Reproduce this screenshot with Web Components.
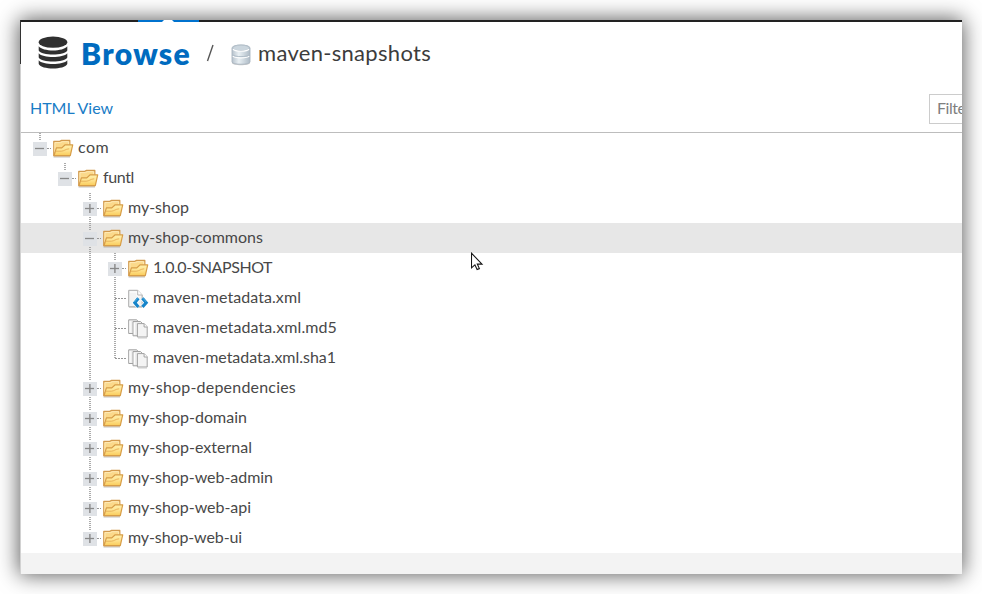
<!DOCTYPE html>
<html lang="en">
<head>
<meta charset="utf-8">
<title>Browse maven-snapshots</title>
<style>
html,body{margin:0;background:#fff;overflow:hidden}
body{font-family:Lato,"Open Sans",sans-serif;color:#333}
</style>
</head>
<body>
<repo-browser></repo-browser>
<script>
const FOLDER = `<svg width="22" height="20" viewBox="0 0 22 20"><defs><linearGradient id="g" x1="0" y1="0" x2="0" y2="1"><stop stop-color="#fff1ae"/><stop offset=".55" stop-color="#fee18c"/><stop offset="1" stop-color="#f9cb59"/></linearGradient></defs>
<path d="M.5 17.9h16.5" stroke="#999" stroke-opacity=".5" stroke-width="1.4"/>
<path d="M.8 16.6V2.3h6l1.4-.8h8.6v4.6h.6v4L16.5 16.6z" fill="#fbd98a" stroke="#d29a4e" stroke-width="1.3" stroke-linejoin="round"/>
<path d="M1.9 13V3.6h5.6l1.6-.9h6.6v3" fill="none" stroke="#ffebb8"/>
<path d="M3.4 8.9h5.4l3.4-3.1h7.5L17.3 16.6H1z" fill="url(#g)" stroke="#d79d48" stroke-width="1.2" stroke-linejoin="round"/><path d="M3 12.2h5.2c3 0 4.2-2.2 8-2.4" fill="none" stroke="#e5ae55" stroke-width=".9"/></svg>`;
const XML = `<svg width="22" height="20" viewBox="0 0 22 20"><path d="M.7 1.3h9L14.2 6v11.7H.7z" fill="#f2f3f3" stroke="#acacac"/><path d="M2 3h7v4h4" fill="none" stroke="#fff"/><path d="M9.7 1.3V6h4.5" fill="#fff" stroke="#b5b5b5"/><path d="M1 18.4h13" stroke="#ccc"/>
<path d="M10.4 9.5L6.8 13.7l3.6 4.1M14.4 9.5l3.8 4.2-3.8 4.1" fill="none" stroke="#fff" stroke-width="4.4"/><path d="M10.4 9.3L6.8 13.7l3.6 4.2M14.4 9.3l3.8 4.4-3.8 4.2" fill="none" stroke="#1684c9" stroke-width="3.1"/><path d="M9.8 9.3L6.4 13M15.2 9.3l3 3.7" stroke="#48afe2" stroke-width="1"/></svg>`;
const DOCS = `<svg width="22" height="20" viewBox="0 0 22 20"><g fill="#eee" stroke="#a2a2a2"><path d="M.7 .8h8l1.8 2v11.7H.7z"/><path d="M5 2.5h7.5l2 2v12.3H5z"/><path d="M9.4 4.6h6.8l3 3.2v10.2H9.4z" fill="#f4f4f4"/><path d="M16.1 4.6v3.4h3.2" fill="#fff"/></g><path d="M2 2v11.5M6.3 3.8v11.9" stroke="#fff"/><path d="M10 19h9" stroke="#ccc"/></svg>`;
const DB = `<svg width="30" height="34" viewBox="0 0 30 34" fill="#303030"><ellipse cx="15" cy="6.2" rx="14.3" ry="5.6"/><path d="M.7 10.2C4.6 15.8 25.4 15.8 29.3 10.2V14.4C26.8 19.8 3.2 19.8.7 14.4z"/><path d="M.7 17.2C4.6 22.2 25.4 22.2 29.3 17.2v4.2C26.8 26.8 3.2 26.8.7 21.4z"/><path d="M.7 24.2c4 5 24.6 5 28.6 0v3.9c-2.6 6-26 6-28.6 0z"/></svg>`;
const REPO = `<svg class="repo" width="20" height="22" viewBox="0 0 20 22"><defs><linearGradient id="r"><stop stop-color="#b7c2cc"/><stop offset=".38" stop-color="#e9f0f4"/><stop offset="1" stop-color="#aebbc6"/></linearGradient></defs><path d="M1 17c0 4 18 4 18 0v2c0 3-18 3-18 0z" fill="#ccc"/><path d="M1 4v14c0 3 18 3 18 0V4C19 0 1 0 1 4z" fill="url(#r)" stroke="#a9b6c1" stroke-width=".9"/><ellipse cx="10" cy="4" rx="8.4" ry="2.9" fill="#cbd6de" stroke="#b4c0ca"/><path d="M2 5.2c2 2.7 14 2.7 16 0M1.8 12c2 2.5 14.4 2.5 16.4 0" fill="none" stroke="#fff" stroke-width="1.2"/><path d="M1.5 10.6c2 2.7 15 2.7 17 0" fill="none" stroke="#b0bdc8"/></svg>`;

/* A single line of text, letter-spaced to fill its width attribute. */
class FitText extends HTMLElement {
  connectedCallback() {
    const root = this.attachShadow({mode: 'open'});
    root.innerHTML = `<style>:host{display:inline-block;white-space:nowrap}span{display:inline-block}</style><span></span>`;
    const s = root.querySelector('span'), t = this.getAttribute('text');
    s.textContent = t;
    const w = +this.getAttribute('width');
    s.style.letterSpacing = (w - s.getBoundingClientRect().width) / t.length + 'px';
  }
}
customElements.define('fit-text', FitText);

class TreeRow extends HTMLElement {
  connectedCallback() {
    const a = n => this.getAttribute(n), d = +a('depth'), t = a('toggle'), x = 18 + 25 * d, w = 32 + 25 * d;
    const line = (x, y1, y2) => `<path d="M${x + 1} ${y1}V${y2}" stroke-width="1.6" stroke-dasharray="1 1"/>`;
    let g = line(x, 0, t ? 8 : 15);
    if (this.hasAttribute('more')) g += line(x, t ? 24 : 16, 30);
    if (this.hasAttribute('outer')) g += line(x - 25, 0, 30);
    g += `<path d="M${t ? x + 8 : x + 1} 15.5H${x + 12}" stroke-dasharray="2 1"/>`;
    if (t) {
      g += `<rect x="${x - 6}" y="9" width="14" height="14" fill="#dfe2e6" stroke="none"/><path d="M${x - 4} 15.5h9" stroke="#888" stroke-width="1.3"/>`;
      if (t === 'plus') g += `<path d="M${x + .9} 11v9" stroke="#888" stroke-width="1.4"/>`;
    }
    const icon = {folder: FOLDER, xml: XML, docs: DOCS}[a('icon')];
    this.attachShadow({mode: 'open'}).innerHTML = `<style>:host{display:flex;height:30px;align-items:flex-start;font-size:16px;line-height:28px;color:#484848}:host([selected]){background:#e7e7e7}svg{display:block;flex:none}.i{width:25px;padding-top:6px}</style>
      <svg width="${w}" height="30" fill="none" stroke="#969696">${g}</svg><div class="i">${icon}</div><fit-text text="${a('label')}" width="${a('width')}"></fit-text>`;
  }
}
customElements.define('tree-row', TreeRow);

class BrowseHeader extends HTMLElement {
  connectedCallback() {
    this.attachShadow({mode: 'open'}).innerHTML = `<style>:host{display:flex;height:62px;align-items:center;padding-left:17px}svg{display:block}
      .t{font:800 30px/60px Lato,sans-serif;color:#006bbf;margin-left:13px}.slash{margin:0 16px 0 15px}.repo{margin-top:3px}.n{font-size:22px;line-height:66px;margin-left:7px;color:#3c3c3c}</style>
      ${DB}<fit-text class="t" text="Browse" width="110"></fit-text>
      <svg class="slash" width="9" height="18"><path d="M1.5 17L7 1" stroke="#555" stroke-width="1.4"/></svg>${REPO}
      <fit-text class="n" text="maven-snapshots" width="173"></fit-text>`;
  }
}
customElements.define('browse-header', BrowseHeader);

class BrowseToolbar extends HTMLElement {
  connectedCallback() {
    this.attachShadow({mode: 'open'}).innerHTML = `<style>:host{display:flex;height:48px;justify-content:space-between;align-items:center;border-bottom:1px solid #bdbdbd;overflow:hidden;font-size:16px;box-sizing:content-box}
      a{color:#1a7cc6;margin-left:9px;line-height:46px}.f{width:32px;height:28px;line-height:26px;margin-top:2px;border:1px solid #ccc;border-right:0;overflow:hidden}.f fit-text{margin-left:7px;color:#808080}</style>
      <a><fit-text text="HTML View" width="83"></fit-text></a><div class="f"><fit-text text="Filter" width="34"></fit-text></div>`;
  }
}
customElements.define('browse-toolbar', BrowseToolbar);

class RepoBrowser extends HTMLElement {
  connectedCallback() {
    const rows = [
      [0, 'minus', 'folder', 'com', 31, ''], [1, 'minus', 'folder', 'funtl', 31, ''],
      [2, 'plus', 'folder', 'my-shop', 61, 'more'], [2, 'minus', 'folder', 'my-shop-commons', 135, 'more selected'],
      [3, 'plus', 'folder', '1.0.0-SNAPSHOT', 119, 'more outer'], [3, '', 'xml', 'maven-metadata.xml', 148, 'more outer'],
      [3, '', 'docs', 'maven-metadata.xml.md5', 184, 'more outer'], [3, '', 'docs', 'maven-metadata.xml.sha1', 183, 'outer'],
      [2, 'plus', 'folder', 'my-shop-dependencies', 168, 'more'], [2, 'plus', 'folder', 'my-shop-domain', 119, 'more'],
      [2, 'plus', 'folder', 'my-shop-external', 124, 'more'], [2, 'plus', 'folder', 'my-shop-web-admin', 145, 'more'],
      [2, 'plus', 'folder', 'my-shop-web-api', 123, 'more'], [2, 'plus', 'folder', 'my-shop-web-ui', 114, '']];
    this.attachShadow({mode: 'open'}).innerHTML = `<style>:host{display:block;width:982px;height:594px;padding:20px;box-sizing:border-box}
      .panel{width:942px;height:554px;display:grid;grid-template-columns:1px 1fr;background:#fff;box-shadow:0 0 20px 1px rgba(0,0,0,.65)}
      .edge{background:linear-gradient(#333 44px,#d2d2d2 44px)}.main{min-width:0;display:flex;flex-direction:column}
      .bar{height:2px;background:#222}.bar svg{display:block;margin-left:117px}.foot{flex:1;background:#f3f3f3}
      .cursor{position:absolute;left:471px;top:252px}</style>
      <div class="panel"><div class="edge"></div><div class="main"><div class="bar"><svg width="61" height="2"><path d="M0 0h61v2H0z" fill="#0072ce"/><path d="M26 0h8l2 2H24z" fill="#fff"/></svg></div>
      <browse-header></browse-header><browse-toolbar></browse-toolbar>
      ${rows.map(r => `<tree-row depth="${r[0]}" toggle="${r[1]}" icon="${r[2]}" label="${r[3]}" width="${r[4]}" ${r[5]}></tree-row>`).join('')}
      <div class="foot"></div></div></div>
      <svg class="cursor" width="13" height="20"><path d="M.5 1.2v14.6l3.4-3 2.2 4.8 2.3-1-2.1-4.5h4.7z" fill="#fff" stroke="#151515" stroke-width="1.1"/></svg>`;
  }
}
customElements.define('repo-browser', RepoBrowser);
</script>
</body>
</html>
